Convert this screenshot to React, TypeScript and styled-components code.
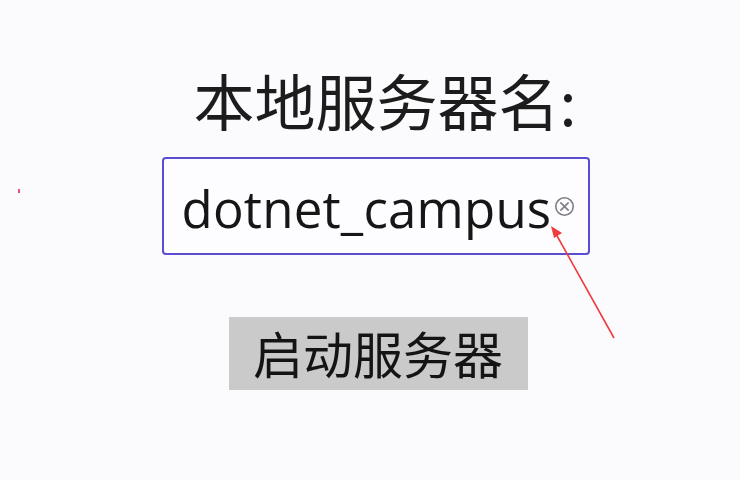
import React from "react";
import styled, { createGlobalStyle } from "styled-components";

const GlobalStyle = createGlobalStyle`
  html, body {
    margin: 0;
    padding: 0;
    background: #fbfbfe;
  }
  body {
    font-family: "Noto Sans CJK SC", "Noto Sans", sans-serif;
  }
`;

const Page = styled.div`
  position: relative;
  width: 740px;
  height: 480px;
  overflow: hidden;
  display: flex;
  flex-direction: column;
  align-items: center;
  padding: 64px 0 0 11px;
  box-sizing: border-box;
`;

const Title = styled.div`
  font-family: "Noto Sans CJK SC", sans-serif;
  font-size: 61px;
  line-height: 72px;
  color: #1c1c1c;
  margin-left: 19px;
`;

const InputBox = styled.div`
  margin-top: 21px;
  width: 428px;
  height: 98px;
  box-sizing: border-box;
  border: 2px solid #5b4dd1;
  border-radius: 4px;
  background: #fdfdff;
  display: flex;
  align-items: center;
  padding: 0 8px 0 18px;
  gap: 3px;
`;

const InputText = styled.span`
  font-family: "Open Sans", "Noto Sans", sans-serif;
  font-size: 51px;
  line-height: 1;
  letter-spacing: 0.2px;
  color: #161616;
  white-space: nowrap;
  margin-top: 4px;
`;

const ClearIcon = styled.svg`
  width: 21px;
  height: 21px;
  flex-shrink: 0;
`;

const StartButton = styled.button`
  margin-top: 62px;
  margin-left: 5px;
  width: 299px;
  height: 73px;
  border: none;
  border-radius: 0;
  background: #cacaca;
  color: #141414;
  font-family: "Noto Sans CJK SC", sans-serif;
  font-size: 50px;
  line-height: 1;
  padding: 0 0 4px 0;
  cursor: pointer;
`;

const Annotation = styled.svg`
  position: absolute;
  left: 0;
  top: 0;
  width: 740px;
  height: 480px;
  pointer-events: none;
`;

export default function App() {
  return (
    <>
      <GlobalStyle />
      <Page>
        <Title>本地服务器名:</Title>
        <InputBox>
          <InputText>dotnet_campus</InputText>
          <ClearIcon viewBox="0 0 20 20">
            <circle cx="10" cy="10" r="8.3" fill="none" stroke="#7c7c86" strokeWidth="1.5" />
            <path d="M6.5 6.5 L13.5 13.5 M13.5 6.5 L6.5 13.5" stroke="#7c7c86" strokeWidth="1.5" strokeLinecap="round" />
          </ClearIcon>
        </InputBox>
        <StartButton>启动服务器</StartButton>
        <Annotation viewBox="0 0 740 480">
          <line x1="614" y1="338" x2="556" y2="234" stroke="#f03c3c" strokeWidth="1.6" />
          <polygon points="551,226 562,233 554,238" fill="#f03c3c" />
          <rect x="18" y="189" width="2" height="4" fill="#e8507a" />
        </Annotation>
      </Page>
    </>
  );
}
